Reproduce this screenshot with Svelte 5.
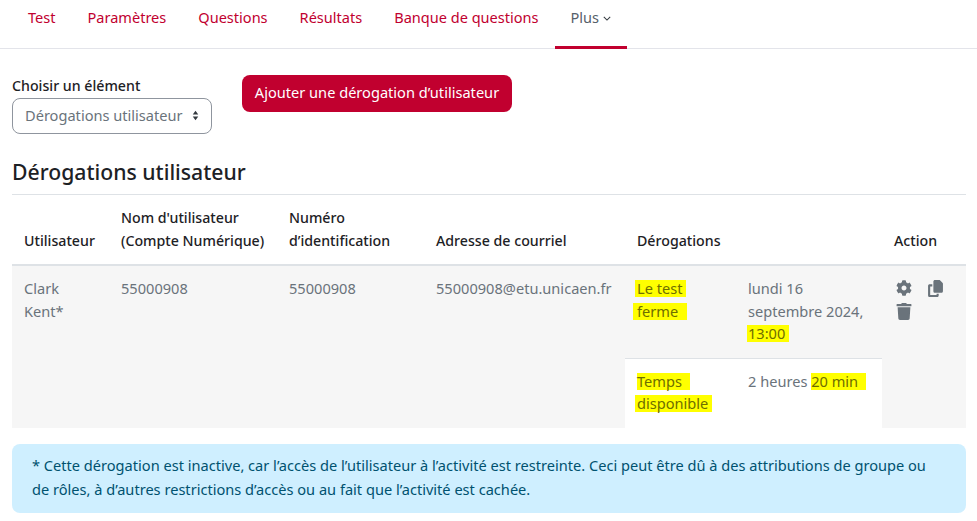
<script>
	const tabs = ['Test', 'Paramètres', 'Questions', 'Résultats', 'Banque de questions'];
</script>

<nav class="tabs">
	{#each tabs as tab}
		<a href="#top" class="tab">{tab}</a>
	{/each}
	<a href="#top" class="tab active">
		Plus
		<svg class="caret" viewBox="0 0 10 6" width="8" height="5"><path d="M1 1l4 4 4-4" fill="none" stroke="currentColor" stroke-width="1.300"/></svg>
	</a>
</nav>

<main>
	<div class="controls">
		<div class="chooser">
			<div class="choose-label">Choisir un élément</div>
			<div class="select">
				<span>Dérogations utilisateur</span>
				<svg viewBox="0 0 10 16" width="7" height="11"><path d="M5 1l4 5.500H1zM5 15L1 9.500h8z" fill="#343a40"/></svg>
			</div>
		</div>
		<button class="add">Ajouter une dérogation d’utilisateur</button>
	</div>

	<h3>Dérogations utilisateur</h3>

	<table>
		<colgroup>
			<col style="width:97px" />
			<col style="width:168px" />
			<col style="width:147px" />
			<col style="width:201px" />
			<col style="width:111px" />
			<col style="width:146px" />
			<col style="width:84px" />
		</colgroup>
		<thead>
			<tr>
				<th>Utilisateur</th>
				<th>Nom d'utilisateur<br />(Compte Numérique)</th>
				<th>Numéro<br />d’identification</th>
				<th>Adresse de courriel</th>
				<th colspan="2">Dérogations</th>
				<th>Action</th>
			</tr>
		</thead>
		<tbody>
			<tr>
				<td rowspan="2">Clark<br />Kent*</td>
				<td rowspan="2">55000908</td>
				<td rowspan="2">55000908</td>
				<td rowspan="2">55000908@etu.unicaen.fr</td>
				<td><mark class="m-test">Le test</mark><br /><mark class="m-ferme">ferme</mark></td>
				<td>lundi 16<br />septembre 2024,<br /><mark class="m-time">13:00</mark></td>
				<td rowspan="2" class="actions">
					<div class="icons">
						<svg viewBox="0 0 512 512" width="16" height="16"><path d="M487.400 315.700l-42.600-24.600c4.300-23.200 4.300-47 0-70.200l42.600-24.600c4.900-2.800 7.100-8.600 5.500-14-11.100-35.600-30-67.800-54.700-94.600-3.800-4.100-10-5.100-14.800-2.300L380.800 110c-17.900-15.400-38.500-27.300-60.800-35.100V25.800c0-5.600-3.900-10.500-9.400-11.700-36.700-8.200-74.300-7.800-109.200 0-5.500 1.200-9.400 6.100-9.400 11.700V75c-22.200 7.900-42.800 19.800-60.800 35.100L88.700 85.500c-4.900-2.800-11-1.900-14.800 2.300-24.700 26.700-43.600 58.900-54.700 94.600-1.700 5.400.6 11.200 5.500 14L67.300 221c-4.300 23.200-4.300 47 0 70.200l-42.600 24.600c-4.900 2.800-7.100 8.600-5.500 14 11.100 35.600 30 67.800 54.700 94.600 3.800 4.100 10 5.100 14.800 2.300l42.600-24.600c17.900 15.400 38.500 27.300 60.800 35.100v49.200c0 5.600 3.900 10.500 9.400 11.700 36.700 8.200 74.300 7.800 109.200 0 5.500-1.200 9.400-6.100 9.400-11.700v-49.200c22.200-7.900 42.800-19.800 60.800-35.100l42.600 24.600c4.900 2.800 11 1.900 14.800-2.300 24.700-26.700 43.600-58.900 54.700-94.600 1.500-5.500-.7-11.300-5.600-14.100zM256 336c-44.100 0-80-35.900-80-80s35.900-80 80-80 80 35.900 80 80-35.900 80-80 80z" fill="#6a737b"/></svg>
						<svg viewBox="0 0 448 512" width="17" height="17"><path d="M208 0H332.100c12.700 0 24.900 5.100 33.900 14.100l67.900 67.900c9 9 14.100 21.200 14.100 33.900V336c0 26.500-21.500 48-48 48H208c-26.500 0-48-21.500-48-48V48c0-26.500 21.500-48 48-48zM48 128h80v64H64V448H256V416h64v48c0 26.500-21.500 48-48 48H48c-26.500 0-48-21.500-48-48V176c0-26.500 21.500-48 48-48z" fill="#6a737b"/></svg>
						<svg viewBox="0 0 448 512" width="16" height="17"><path d="M432 32H312l-9.400-18.700A24 24 0 0 0 281.100 0H166.800a23.700 23.700 0 0 0-21.400 13.300L136 32H16A16 16 0 0 0 0 48v32a16 16 0 0 0 16 16h416a16 16 0 0 0 16-16V48a16 16 0 0 0-16-16zM53.200 467a48 48 0 0 0 47.900 45h245.800a48 48 0 0 0 47.900-45L416 128H32z" fill="#6a737b"/></svg>
					</div>
				</td>
			</tr>
			<tr class="sub">
				<td><mark class="m-temps">Temps</mark><br /><mark class="m-dispo">disponible</mark></td>
				<td>2 heures <mark class="m-min">20 min</mark></td>
			</tr>
		</tbody>
	</table>

	<div class="alert">* Cette dérogation est inactive, car l’accès de l’utilisateur à l’activité est restreinte. Ceci peut être dû à des attributions de groupe ou de rôles, à d’autres restrictions d’accès ou au fait que l’activité est cachée.</div>
</main>

<style>
	:global(body) {
		font-family: "Noto Sans", "Open Sans", sans-serif;
		font-size: 14.600px;
		color: #1d2125;
		background: #fff;
	}

	.tabs {
		display: flex;
		height: 48px;
		padding-left: 12px;
		border-bottom: 1px solid #e3e4ea;
	}

	.tab {
		display: block;
		padding: 6px 16px 0;
		color: #c1002f;
		font-size: 14.560px;
		text-decoration: none;
		line-height: 22px;
		height: 40px;
	}

	.tab.active {
		color: #56606a;
		border-bottom: 3px solid #c1002f;
	}

	.caret {
		vertical-align: 2px;
		color: #343a40;
	}

	main {
		padding: 0 11px 0 12px;
	}

	.controls {
		display: flex;
		gap: 30px;
		padding-top: 26px;
	}

	.choose-label {
		font-size: 14.200px;
		line-height: 22px;
		font-weight: 500;
	}

	.select {
		display: flex;
		align-items: center;
		justify-content: space-between;
		width: 200px;
		height: 36px;
		margin-top: 1px;
		padding: 0 12px 2px;
		box-sizing: border-box;
		border: 1px solid #8f959e;
		border-radius: 8px;
		color: #6a737b;
	}

	.add {
		height: 37px;
		width: 270px;
		padding: 0 0 3px;
		border: none;
		border-radius: 8px;
		background: #c1002f;
		color: #fff;
		font: inherit;
		margin: 0;
	}

	h3 {
		margin: 23px 0 0;
		padding-bottom: 8px;
		font-size: 21.200px;
		line-height: 29px;
		font-weight: 500;
		border-bottom: 1px solid #dee2e6;
	}

	table {
		width: 954px;
		table-layout: fixed;
		border-collapse: collapse;
	}

	th, td {
		padding: 12px;
		text-align: left;
		line-height: 22.500px;
		box-sizing: border-box;
	}

	th {
		font-size: 14.200px;
		font-weight: 500;
		white-space: nowrap;
		vertical-align: bottom;
		border-bottom: 2px solid #dee2e6;
	}

	td {
		padding: 11px 12px 13px;
		vertical-align: top;
		font-weight: 400;
		color: #6a737b;
		background: #f6f6f6;
	}

	.sub td {
		background: #fff;
		border-top: 1px solid #dee2e6;
	}

	mark {
		display: inline-block;
		line-height: 17px;
		background: #ffff00;
		color: #6e6e00;
	}

	/* hand-drawn highlights, each one overshoots its word differently */
	.m-test { padding: 0 4px 0 2px; margin-left: -2px; }
	.m-ferme { padding: 0 9px 0 4px; margin-left: -4px; }
	.m-time { padding: 0 4px 0 1px; margin-left: -1px; }
	.m-temps { padding: 0 8px 0 0; }
	.m-dispo { padding: 0 4px 0 2px; margin-left: -2px; }
	.m-min { padding: 0 8px 0 0; }

	.icons {
		display: grid;
		grid-template-columns: 16px 17px;
		column-gap: 15px;
		row-gap: 6px;
		padding: 3px 0 0 2px;
	}

	.alert {
		margin-top: 16px;
		padding: 9px 24px 12px 20px;
		background: #cfefff;
		color: #00526f;
		border-radius: 8px;
		line-height: 24px;
	}
</style>
